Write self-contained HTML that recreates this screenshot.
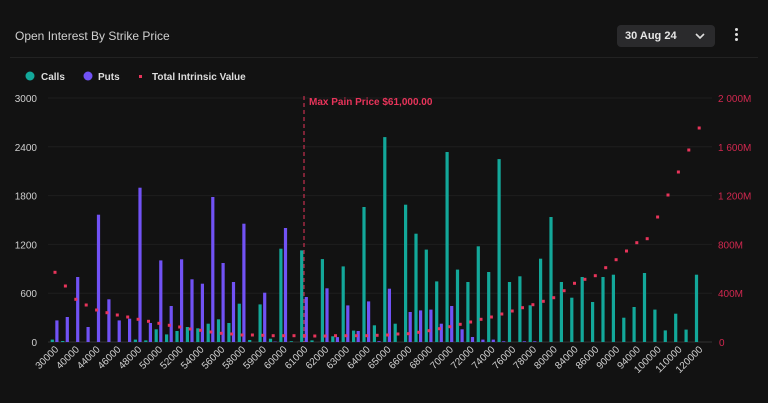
<!DOCTYPE html>
<html><head><meta charset="utf-8"><style>
html,body{margin:0;padding:0;background:#121212;width:768px;height:403px;overflow:hidden;font-family:"Liberation Sans",sans-serif}
.t{position:absolute;left:15px;top:29px;color:#d0d0d0;font-size:12px}
.dd{position:absolute;left:617px;top:25px;width:98px;height:22px;background:#2a2a2c;border-radius:4px;color:#e6e6e6;font-size:11px;font-weight:bold}
.dd span{position:absolute;left:8px;top:5px}
.k{position:absolute;left:735px;top:28px;width:4px}
.k i{display:block;width:3px;height:3px;background:#ddd;border-radius:50%;margin-bottom:2px}
.hr{position:absolute;left:10px;right:10px;top:57px;height:1px;background:#222}
.lg{position:absolute;top:70px;color:#ddd;font-size:10px;font-weight:bold}
svg{position:absolute;left:0;top:0}
</style></head><body>
<div class="t">Open Interest By Strike Price</div>
<div class="dd"><span>30 Aug 24</span><svg width="98" height="22" style="left:0;top:0"><path d="M79 9 L83 13 L87 9" stroke="#ddd" stroke-width="1.6" fill="none"/></svg></div>
<div class="k"><i></i><i></i><i></i></div>
<div class="hr"></div>
<svg width="768" height="403" id="c"></svg>
<script>
var s=document.getElementById('c'),h='';
function r(x,y,w,hh,c){h+='<rect x="'+x+'" y="'+y+'" width="'+w+'" height="'+hh+'" fill="'+c+'"/>';}
function t(x,y,txt,c,a,extra){h+='<text x="'+x+'" y="'+y+'" fill="'+c+'" font-size="10" text-anchor="'+(a||'start')+'" '+(extra||'')+'>'+txt+'</text>';}
// legend
h+='<circle cx="30" cy="76" r="4.5" fill="#13a89a"/>';t(41,80,'Calls','#ddd','start','font-weight="bold"');
h+='<circle cx="88" cy="76" r="4.5" fill="#7152f5"/>';t(98,80,'Puts','#ddd','start','font-weight="bold"');
r(139,75,3,3,'#e8345a');t(152,80,'Total Intrinsic Value','#ddd','start','font-weight="bold"');
var L=['3000','2400','1800','1200','600','0'],R=['2 000M','1 600M','1 200M','800M','400M','0'];
for(var i=0;i<6;i++){var y=98+i*48.8;h+='<line x1="48" x2="712" y1="'+y+'" y2="'+y+'" stroke="'+(i==5?'#333':'#1e1e1e')+'" stroke-width="1"/>';
t(37,y+4,L[i],'#cfcfcf','end');t(i==5?719:718,y+4,R[i],'#d0284f','start');}
var C=[30,12,0,0,0,0,0,0,29,20,156,94,135,185,168,225,279,234,471,25,463,41,1148,10,1127,20,1020,70,930,140,1660,205,2520,225,1689,1332,1136,746,2337,890,738,1177,861,2250,738,808,451,1025,1537,738,545,800,492,800,828,299,430,849,398,143,348,152,828];
var P=[266,307,800,185,1566,525,266,287,1898,234,1004,443,1017,771,717,1783,972,738,1455,0,607,5,1402,0,553,0,660,60,450,135,500,10,656,0,369,389,398,225,443,156,62,29,29,8,0,8,8,0,0,0,0,0,0,0,0,0,0,0,0,0,0,0,0];
var D=[277,318,358,375,390,398,405,411,418,424,430,436,441,447,451,456,460,462,465,465,466,467,467,467,467,468,468,467,467,467,467,466,465,462,461,457,452,446,440,433,426,418,411,402,393,383,374,364,353,332,310,298,287,263,239,213,188,176,111,45];
var k=0.0813,B=342;
var labs=['30000','40000','44000','46000','48000','50000','52000','54000','56000','58000','59000','60000','61000','62000','63000','64000','65000','66000','68000','70000','72000','74000','76000','78000','80000','84000','86000','90000','94000','100000','110000','120000'];
for(i=0;i<63;i++){var cx=55+i*10.39;
if(C[i]>0)r((cx-4.3).toFixed(1),(B-C[i]*k).toFixed(1),3.2,(C[i]*k).toFixed(1),'#13a89a');
if(P[i]>0)r((cx+0.3).toFixed(1),(B-P[i]*k).toFixed(1),3.2,(P[i]*k).toFixed(1),'#7152f5');
var dy=i<60?180+D[i]/3:[172,150,128][i-60];r((cx-1.5).toFixed(1),(dy-1.5).toFixed(1),3,3,'#e8345a');
if(i%2==0){var lx=cx+4,ly=350;t(lx,ly,labs[i/2],'#cfcfcf','end','font-size="9" transform="rotate(-45 '+lx+' '+ly+')"');}}
h+='<line x1="304" x2="304" y1="96" y2="342" stroke="#e8345a" stroke-width="1" stroke-dasharray="4,3"/>';
t(309,105,'Max Pain Price $61,000.00','#e8345a','start','font-weight="bold"');
s.innerHTML=h;
</script>
</body></html>
